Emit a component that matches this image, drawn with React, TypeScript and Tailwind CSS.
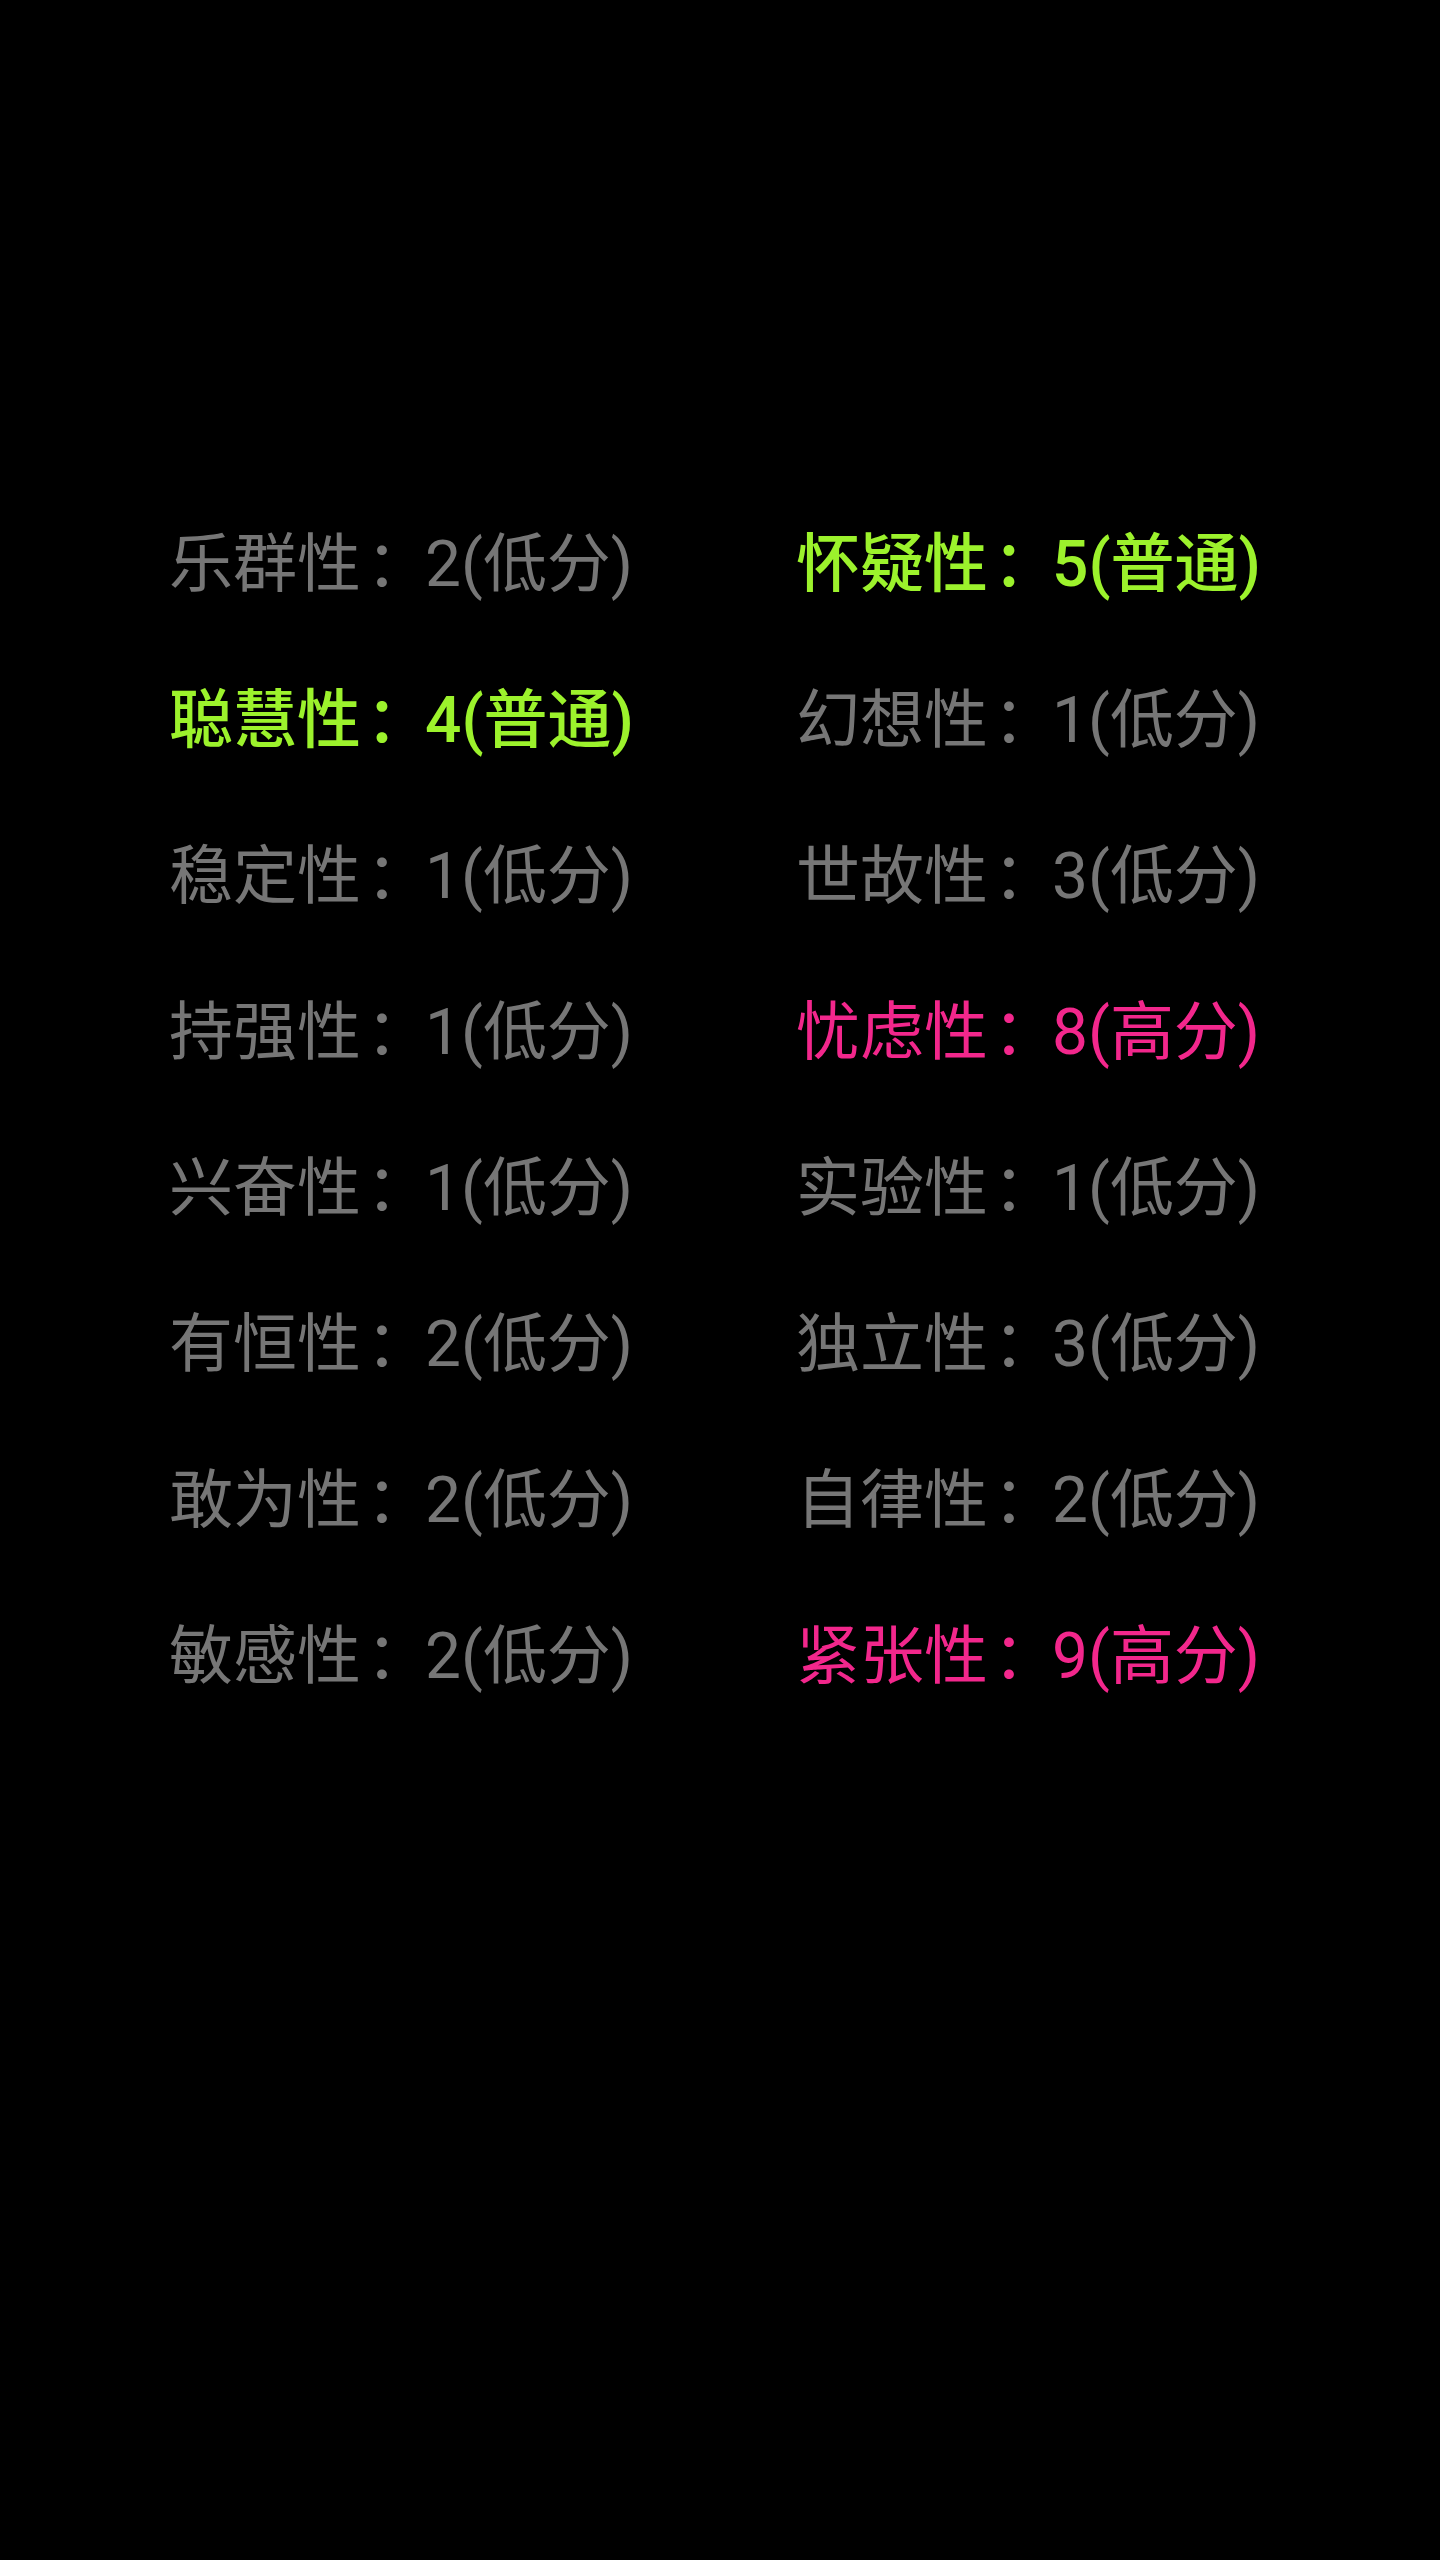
const rows: [string, string, string][] = [
  ["乐群性", "2(低分)", "low"],
  ["怀疑性", "5(普通)", "mid"],
  ["聪慧性", "4(普通)", "mid"],
  ["幻想性", "1(低分)", "low"],
  ["稳定性", "1(低分)", "low"],
  ["世故性", "3(低分)", "low"],
  ["持强性", "1(低分)", "low"],
  ["忧虑性", "8(高分)", "high"],
  ["兴奋性", "1(低分)", "low"],
  ["实验性", "1(低分)", "low"],
  ["有恒性", "2(低分)", "low"],
  ["独立性", "3(低分)", "low"],
  ["敢为性", "2(低分)", "low"],
  ["自律性", "2(低分)", "low"],
  ["敏感性", "2(低分)", "low"],
  ["紧张性", "9(高分)", "high"],
];

function levelClass(level: string) {
  if (level === "mid") return "text-[#9cf22c] font-medium";
  if (level === "high") return "text-[#f2278c]";
  return "text-[#767676]";
}

export default function App() {
  return (
    <div
      className="min-h-[2560px] w-full bg-black pt-[487px] pl-[169px]"
      style={{ fontFamily: "Roboto, 'Noto Sans CJK SC', sans-serif" }}
    >
      <div className="grid grid-cols-[627px_auto]">
        {rows.map(([name, score, level]) => (
          <div
            key={name}
            className={`h-[156px] flex items-center text-[64px] leading-none whitespace-nowrap ${levelClass(level)}`}
          >
            <span>{name}</span>
            {/* push the colon glyph right without changing its advance */}
            <span className="pl-[5px] tracking-[-5px]">：</span>
            <span>{score}</span>
          </div>
        ))}
      </div>
    </div>
  );
}
